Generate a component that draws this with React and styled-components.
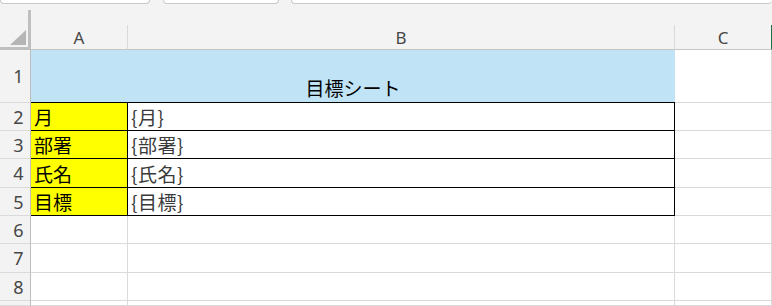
import React from 'react'
import styled, { createGlobalStyle } from 'styled-components'

const GlobalStyle = createGlobalStyle`
  html, body {
    margin: 0;
    padding: 0;
    background: #ffffff;
    overflow: hidden;
  }
  * {
    box-sizing: border-box;
  }
`

const Frame = styled.div`
  width: 772px;
  height: 100vh;
  display: flex;
  flex-direction: column;
  overflow: hidden;
  background: #f3f3f3;
  font-family: "Noto Sans CJK JP", "Noto Sans", sans-serif;
`

const TabStrip = styled.div`
  height: 4px;
  display: flex;
  flex-shrink: 0;
`

const Tab = styled.div`
  width: ${(p) => p.$width}px;
  margin-left: ${(p) => p.$gap || 0}px;
  height: 4px;
  background: #ffffff;
  border: 1px solid #c9c9c9;
  border-top: none;
  border-radius: 0 0 5px 5px;
  flex-shrink: 0;
  ${(p) => p.$grow && 'flex: 1; border-right: none;'}
`

const Grid = styled.div`
  flex: 1;
  display: grid;
  grid-template-columns: 31px 97px 547px 97px;
  grid-template-rows: 21px 25px 53px 28px 28px 29px 28px 28px 29px 28px 1fr;
  background: #ffffff;
`

const TopGap = styled.div`
  grid-column: 2 / -1;
  background: #f3f3f3;
`

const Corner = styled.div`
  grid-row: 1 / span 2;
  background: #f3f3f3;
  display: flex;
  flex-direction: column;
`

const CornerInner = styled.div`
  flex: 1;
  margin-top: 6px;
  border-right: 3px solid #bfbfbf;
  border-bottom: 3px solid #bfbfbf;
  display: flex;
  align-items: flex-end;
  justify-content: flex-end;
  padding: 0 2px 2px 0;
`

const Triangle = styled.div`
  width: 0;
  height: 0;
  border-left: 16px solid transparent;
  border-bottom: 15px solid #b5b5b5;
`

const ColHead = styled.div`
  background: #f3f3f3;
  border-bottom: 1px solid #c6c6c6;
  border-right: 1px solid ${(p) => (p.$active ? '#1e7145' : '#d9d9d9')};
  display: flex;
  align-items: center;
  justify-content: center;
  font-family: "Noto Sans", "Open Sans", sans-serif;
  font-size: 17px;
  color: #474747;
  padding-top: 1px;
`

const RowHead = styled.div`
  background: #f3f3f3;
  border-right: 1px solid #bdbdbd;
  border-bottom: 1px solid #dadada;
  display: flex;
  align-items: center;
  justify-content: center;
  padding-left: 7px;
  font-family: "Noto Sans", "Open Sans", sans-serif;
  font-size: 18px;
  color: #474747;
`

const Cell = styled.div`
  background: ${(p) => p.$fill || '#ffffff'};
  border-right: 1px solid ${(p) => (p.$boxed ? '#000000' : '#dadada')};
  border-bottom: 1px solid ${(p) => (p.$boxed ? '#000000' : '#dadada')};
  display: flex;
  align-items: flex-end;
  padding: 0 3px 0 3px;
  font-size: 19px;
  line-height: 27px;
  color: ${(p) => (p.$muted ? '#3a3a3a' : '#000000')};
  letter-spacing: ${(p) => (p.$muted ? '0.5px' : '0')};
  white-space: nowrap;
`

const TitleCell = styled.div`
  grid-column: span 2;
  background: #c0e4f5;
  border-bottom: 1px solid #000000;
  display: flex;
  align-items: flex-end;
  justify-content: center;
  padding-bottom: 1px;
  font-size: 19px;
  line-height: 27px;
  color: #000000;
`

const fields = ['月', '部署', '氏名', '目標']

const App = () => {
  return (
    <>
      <GlobalStyle />
      <Frame>
        <TabStrip>
          <Tab $width={150} />
          <Tab $width={116} $gap={13} />
          <Tab $grow $gap={12} />
        </TabStrip>
        <Grid>
          <Corner>
            <CornerInner>
              <Triangle />
            </CornerInner>
          </Corner>
          <TopGap />
          <ColHead>A</ColHead>
          <ColHead>B</ColHead>
          <ColHead $active>C</ColHead>

          <RowHead>1</RowHead>
          <TitleCell>目標シート</TitleCell>
          <Cell />

          {fields.map((f, i) => (
            <React.Fragment key={f}>
              <RowHead>{i + 2}</RowHead>
              <Cell $fill="#ffff00" $boxed>{f}</Cell>
              <Cell $boxed $muted>{`{${f}}`}</Cell>
              <Cell />
            </React.Fragment>
          ))}

          {[6, 7, 8, null].map((n, i) => (
            <React.Fragment key={i}>
              <RowHead>{n}</RowHead>
              <Cell />
              <Cell />
              <Cell />
            </React.Fragment>
          ))}
        </Grid>
      </Frame>
    </>
  )
}

export default App
